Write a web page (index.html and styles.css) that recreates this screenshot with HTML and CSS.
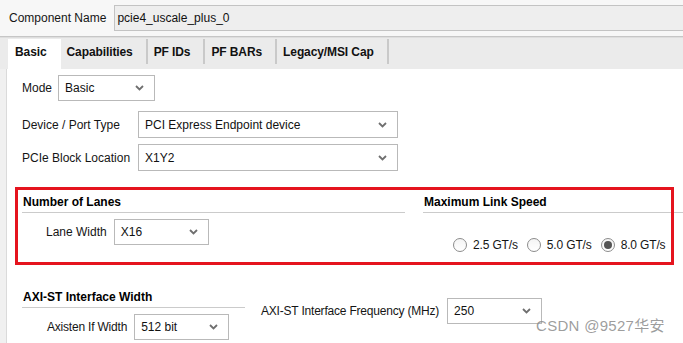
FILE: index.html
```html
<!DOCTYPE html>
<html>
	<head>
		<meta charset="UTF-8">
		<title>pcie4_uscale_plus_0</title>
		<link rel="stylesheet" href="styles.css">
	</head>
	<body>
		<div class="header">
			<span class="hdr-label">Component Name</span>
			<div class="name-box">pcie4_uscale_plus_0</div>
		</div>

		<div class="tabbar">
			<div class="tab active">Basic</div>
			<div class="tab">Capabilities</div>
			<div class="tab">PF IDs</div>
			<div class="tab">PF BARs</div>
			<div class="tab">Legacy/MSI Cap</div>
		</div>

		<div class="panel">
			<div class="panel-edge"></div>
			<div class="panel-body">
				<div class="field row-mode">
					<span class="lbl lbl-mode">Mode</span>
					<div class="select sel-mode"><span>Basic</span><svg class="chev" width="9" height="6" viewBox="0 0 9 6"><path d="M1 1 L4.5 4.5 L8 1" fill="none" stroke="#6f6f6f" stroke-width="1.8"/></svg></div>
				</div>
				<div class="field row-device">
					<span class="lbl lbl-wide">Device / Port Type</span>
					<div class="select sel-wide"><span>PCI Express Endpoint device</span><svg class="chev" width="9" height="6" viewBox="0 0 9 6"><path d="M1 1 L4.5 4.5 L8 1" fill="none" stroke="#6f6f6f" stroke-width="1.8"/></svg></div>
				</div>
				<div class="field row-loc">
					<span class="lbl lbl-wide">PCIe Block Location</span>
					<div class="select sel-wide"><span>X1Y2</span><svg class="chev" width="9" height="6" viewBox="0 0 9 6"><path d="M1 1 L4.5 4.5 L8 1" fill="none" stroke="#6f6f6f" stroke-width="1.8"/></svg></div>
				</div>

				<div class="groups groups-top">
					<div class="group group-lanes">
						<div class="group-title">Number of Lanes</div>
						<div class="field group-row lanes-row">
							<span class="lbl lbl-lane">Lane Width</span>
							<div class="select sel-small"><span>X16</span><svg class="chev" width="9" height="6" viewBox="0 0 9 6"><path d="M1 1 L4.5 4.5 L8 1" fill="none" stroke="#6f6f6f" stroke-width="1.8"/></svg></div>
						</div>
					</div>
					<div class="group group-speed">
						<div class="group-title">Maximum Link Speed</div>
						<div class="radios">
							<label class="radio"><span class="dot"></span>2.5 GT/s</label>
							<label class="radio"><span class="dot"></span>5.0 GT/s</label>
							<label class="radio"><span class="dot on"></span>8.0 GT/s</label>
						</div>
					</div>
					<div class="mark-box"></div>
				</div>

				<div class="groups groups-bottom">
					<div class="group group-axi">
						<div class="group-title">AXI-ST Interface Width</div>
						<div class="field group-row axi-row">
							<span class="lbl lbl-axi">Axisten If Width</span>
							<div class="select sel-small"><span>512 bit</span><svg class="chev" width="9" height="6" viewBox="0 0 9 6"><path d="M1 1 L4.5 4.5 L8 1" fill="none" stroke="#6f6f6f" stroke-width="1.8"/></svg></div>
						</div>
					</div>
					<div class="field freq">
						<span class="lbl lbl-freq">AXI-ST Interface Frequency (MHz)</span>
						<div class="select sel-small"><span>250</span><svg class="chev" width="9" height="6" viewBox="0 0 9 6"><path d="M1 1 L4.5 4.5 L8 1" fill="none" stroke="#6f6f6f" stroke-width="1.8"/></svg></div>
					</div>
				</div>
			</div>
		</div>

		<div class="watermark">CSDN @9527华安</div>
	</body>
</html>
```

FILE: styles.css
```css
html, body{
	margin: 0;
	height: 343px;
	overflow: hidden;
}
body{
	background-color: #f7f7f7;
	font-family: "Liberation Sans", Arial, sans-serif;
	font-size: 12px;
	color: #151515;
	position: relative;
}

/* component name */
.header{
	display: flex;
	align-items: center;
	padding: 5px 0 0 9px;
}
.name-box{
	flex: 1;
	height: 26px;
	box-sizing: border-box;
	margin-left: 8px;
	margin-right: -2px;
	padding-left: 2px;
	line-height: 24px;
	border: 1px solid #c3c3c3;
	background-color: #eeeeee;
	color: #111;
}

/* tabs */
.tabbar{
	display: flex;
	align-items: flex-end;
	margin-top: 5px;
	height: 32px;
	padding-left: 8px;
	border-top: 1px solid #c6c6c6;
	box-shadow: inset 0 1px 0 #dedede;
	background-color: #ebebeb;
}
.tab{
	position: relative;
	height: 30px;
	line-height: 27px;
	padding: 0 15px 0 6px;
	font-weight: bold;
	letter-spacing: -0.1px;
	color: #111;
}
.tab::after{
	content: "";
	position: absolute;
	right: 0;
	top: 0;
	width: 2px;
	height: 25px;
	background-color: #c9c9c9;
}
.tab.active{
	background-color: #fff;
	padding: 0 14px 0 7px;
}
.tab.active::after{
	display: none;
}

/* panel */
.panel{
	display: flex;
	height: 280px;
}
.panel-edge{
	width: 6px;
	background-color: #f0f0f0;
	border-right: 1px solid #dadada;
}
.panel-body{
	flex: 1;
	background-color: #fff;
	padding-left: 15px;
}

.field{
	display: flex;
	align-items: center;
}
.lbl{
	white-space: nowrap;
}
.lbl-mode{ margin-right: 6px; }
.lbl-wide{ width: 116px; }
.lbl-lane{ margin-right: 7px; }
.lbl-axi{ margin-right: 7px; letter-spacing: -0.2px; }
.lbl-freq{ margin-right: 8px; letter-spacing: -0.2px; }

.row-mode{ margin-top: 6px; }
.row-device{ margin-top: 10px; }
.row-loc{ margin-top: 6px; }

.select{
	display: flex;
	align-items: center;
	justify-content: space-between;
	box-sizing: border-box;
	height: 26px;
	padding: 0 10px 0 6px;
	border: 1px solid #b9b9b9;
	background-color: #fff;
	color: #111;
}
.sel-mode{ width: 97px; }
.sel-wide{ width: 260px; height: 27px; }
.sel-small{ width: 95px; }

/* groups */
.groups{
	display: flex;
	align-items: flex-start;
	position: relative;
}
.groups-top{
	margin-top: 23px;
	gap: 18px;
}
.groups-bottom{
	margin-top: 36px;
	gap: 16px;
}
.group-lanes{ width: 383px; }
.group-speed{ flex: 1; }
.group-axi{ width: 223px; }
.group-title{
	font-weight: bold;
	line-height: 16px;
	padding: 0 0 2px 1px;
	border-bottom: 1px solid #cbcbcb;
	color: #000;
}
.group-row{ margin-top: 6px; }
.lanes-row{ padding-left: 24px; }
.axi-row{ padding-left: 25px; }
.freq{ margin-top: 9px; }

.radios{
	display: flex;
	margin-top: 24px;
	padding-left: 30px;
	line-height: 16px;
	gap: 9px;
	letter-spacing: -0.15px;
}
.radio{
	display: flex;
	align-items: center;
	gap: 6px;
}
.dot{
	width: 14px;
	height: 14px;
	box-sizing: border-box;
	border: 1px solid #8c8c8c;
	border-radius: 50%;
	background: linear-gradient(#f4f4f4, #ffffff);
	display: flex;
	align-items: center;
	justify-content: center;
}
.dot.on::before{
	content: "";
	width: 8px;
	height: 8px;
	border-radius: 50%;
	background-color: #555;
}

/* annotation */
.mark-box{
	position: absolute;
	left: -7px;
	top: -7px;
	width: 659px;
	height: 78px;
	box-sizing: border-box;
	border: 3px solid #e5141e;
	pointer-events: none;
}

.watermark{
	position: absolute;
	left: 536px;
	top: 317px;
	font-family: "Liberation Sans", "Noto Sans CJK SC", sans-serif;
	font-size: 15px;
	line-height: 18px;
	letter-spacing: 0.3px;
	color: rgba(140, 140, 140, 0.85);
}
```
